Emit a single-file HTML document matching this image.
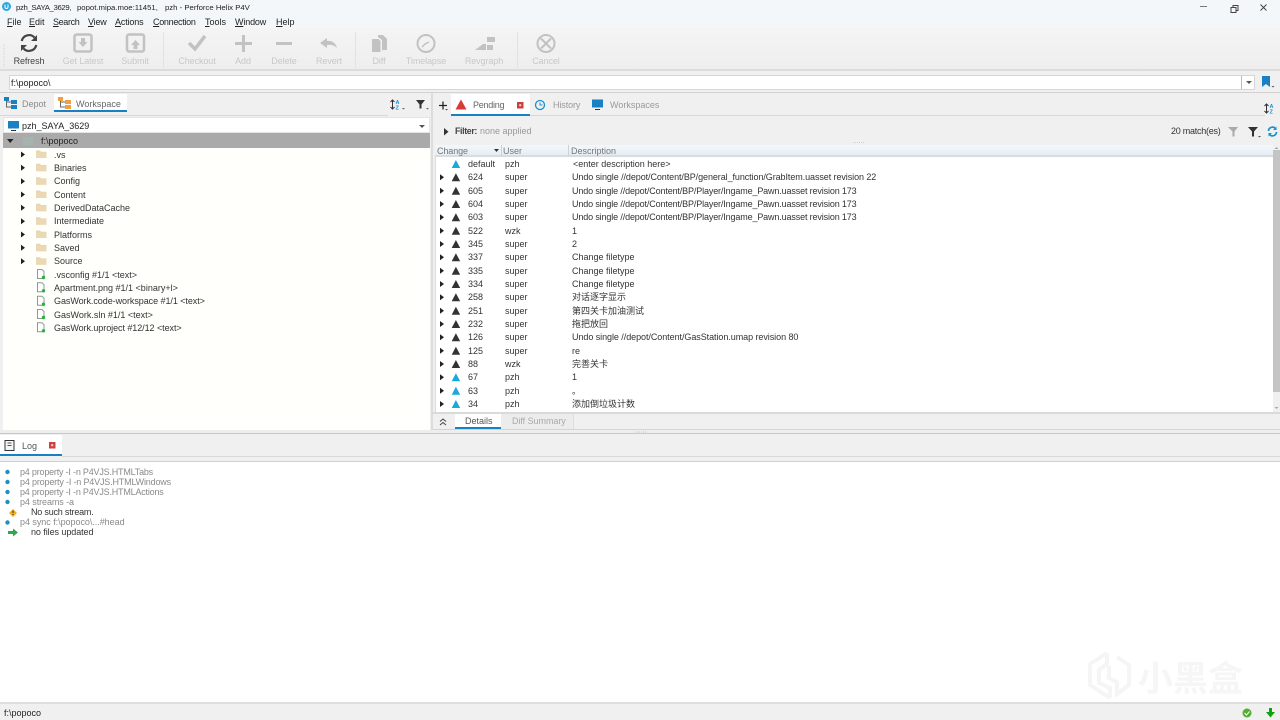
<!DOCTYPE html>
<html><head><meta charset="utf-8"><style>
html,body{margin:0;padding:0;width:1280px;height:720px;overflow:hidden;background:#fff}
body{position:relative;font-family:"Liberation Sans","Noto Sans CJK SC",sans-serif;font-size:9px;color:#333}
.b{position:absolute}
.t{position:absolute;white-space:nowrap;line-height:12px;height:12px;transform:translateY(-6px);color:#333}
.g{color:#c2c2c2}.m{color:#8a8a8a}.k{color:#222}
svg{position:absolute;overflow:visible}
.tb{position:absolute;white-space:nowrap;line-height:12px;text-align:center;width:80px;top:55px;color:#c8c8c8;font-size:9px;letter-spacing:-.1px}
u{text-decoration:underline;text-underline-offset:1px}
.u1{letter-spacing:-.08px}.u2{letter-spacing:-.14px}.u3{letter-spacing:-.06px}
</style></head><body>
<svg width="0" height="0" style="position:absolute">
<defs>
<g id="fold"><path d="M0 1h4l1 1.200h5.500v6.300H0z" fill="#e7d6ae"/><path d="M0 3h10.500v5.500H0z" fill="#ead9b4"/></g>
<g id="file"><path d="M.5.5h4.500l2 2v7h-6.500z" fill="#fff" stroke="#8c9a94" stroke-width="1"/><circle cx="6.500" cy="8.500" r="1.700" fill="#2fae3f"/></g>
<path id="arr" d="M0 0l4 3-4 3z" fill="#222"/>
<path id="tri" d="M0 8L4.200 0l4.300 8z"/>
</defs>
</svg>

<!-- title bar -->
<div class="b" style="left:0;top:0;width:1280px;height:15px;background:#f4f7f9"></div>
<svg style="left:2px;top:2px" width="9" height="9"><circle cx="4.500" cy="4.500" r="4.500" fill="#2aa7de"/><path d="M3 2.500v2.500a1.500 1.500 0 0 0 3 0V2.500" stroke="#fff" fill="none"/></svg>
<span class="t k" style="left:16px;top:7.500px;font-size:7.750px;letter-spacing:-.35px">pzh_SAYA_3629,</span>
<span class="t k" style="left:77px;top:7.500px;font-size:7.750px">popot.mipa.moe:11451,</span>
<span class="t k" style="left:165px;top:7.500px;font-size:7.750px">pzh - Perforce Helix P4V</span>
<svg style="left:1200px;top:4px" width="70" height="10"><path d="M0 2.500h7" stroke="#777" stroke-width="1"/><path d="M31 3.500h5v5h-5zM33 3.500V1.500h5v5h-2" stroke="#444" fill="none"/><path d="M60.500 .5l6 6M66.500 .5l-6 6" stroke="#444" fill="none"/></svg>

<!-- menu -->
<div class="b" style="left:0;top:15px;width:1280px;height:13px;background:#f4f7f9"></div>
<span class="t k" style="left:7px;top:22px"><u>F</u>ile</span>
<span class="t k" style="left:29px;top:22px"><u>E</u>dit</span>
<span class="t k" style="left:53px;top:22px;letter-spacing:-.35px"><u>S</u>earch</span>
<span class="t k" style="left:88px;top:22px;letter-spacing:-.2px"><u>V</u>iew</span>
<span class="t k" style="left:115px;top:22px;letter-spacing:-.15px"><u>A</u>ctions</span>
<span class="t k" style="left:153px;top:22px;letter-spacing:-.3px"><u>C</u>onnection</span>
<span class="t k" style="left:205px;top:22px"><u>T</u>ools</span>
<span class="t k" style="left:235px;top:22px;letter-spacing:-.15px"><u>W</u>indow</span>
<span class="t k" style="left:276px;top:22px"><u>H</u>elp</span>

<!-- toolbar -->
<div class="b" style="left:0;top:28px;width:1280px;height:43px;background:linear-gradient(#f4f4f4,#eeeeee);border-bottom:2px solid #dcdcdc;box-sizing:border-box"></div>
<div class="b" style="left:163px;top:32px;width:1px;height:36px;background:#e2e2e2"></div>
<div class="b" style="left:355px;top:32px;width:1px;height:36px;background:#e2e2e2"></div>
<div class="b" style="left:517px;top:32px;width:1px;height:36px;background:#e2e2e2"></div>
<div class="tb" style="left:-11px;color:#444">Refresh</div>
<div class="tb" style="left:43px">Get Latest</div>
<div class="tb" style="left:95px">Submit</div>
<div class="tb" style="left:157px">Checkout</div>
<div class="tb" style="left:203px">Add</div>
<div class="tb" style="left:244px">Delete</div>
<div class="tb" style="left:289px">Revert</div>
<div class="tb" style="left:339px">Diff</div>
<div class="tb" style="left:386px">Timelapse</div>
<div class="tb" style="left:444px">Revgraph</div>
<div class="tb" style="left:506px">Cancel</div>
<svg style="left:0;top:28px" width="570" height="30">
<g fill="none" stroke="#444" stroke-width="2.200"><path d="M21.700 13a7.500 7.500 0 0 1 12.800-3.500"/><path d="M36.300 17a7.500 7.500 0 0 1-12.800 3.500"/></g>
<path d="M37 7v6h-6zM21 23v-6h6z" fill="#444"/>
<g fill="none" stroke="#c2c2c2" stroke-width="2.500"><rect x="74.500" y="6.500" width="17" height="17" rx="2"/><rect x="127" y="6.500" width="17" height="17" rx="2"/></g>
<path d="M81 10h4v4h2.500l-4.500 5-4.500-5H81zM133.500 21h4v-4h2.500l-4.500-5-4.500 5h2.500z" fill="#c2c2c2"/>
<path d="M189 15l6 6 10-13" fill="none" stroke="#c2c2c2" stroke-width="3.500"/>
<path d="M243.500 7v17M235 15.500h17M276 15.500h16" stroke="#c2c2c2" stroke-width="3" fill="none"/>
<path d="M320 15l7-5v3c4-.5 8 .5 10 7-3-3-6-3.500-10-3v3z" fill="#c2c2c2"/>
<path d="M372 11h6.500l2 2v11H372zM378 7h5l4 4v11h-5V12l-4-3z" fill="#c2c2c2"/>
<circle cx="426" cy="15.500" r="8.500" fill="none" stroke="#c2c2c2" stroke-width="2"/><path d="M422 19l3-3 4-2" fill="none" stroke="#c2c2c2" stroke-width="1.500"/>
<path d="M475 22l8-6h3v6zM487 9h8v5h-8zM487 17h6v5h-6z" fill="#c2c2c2"/>
<circle cx="546" cy="15.500" r="8.500" fill="none" stroke="#c2c2c2" stroke-width="2"/><path d="M541 10.500l10 10M551 10.500l-10 10" stroke="#c2c2c2" stroke-width="2"/>
</svg>
<svg style="left:3px;top:44px" width="3" height="24"><path d="M1 0v24" stroke="#d4d4d4" stroke-dasharray="1 1"/></svg>

<!-- path bar -->
<div class="b" style="left:0;top:71px;width:1280px;height:22px;background:#f0f0f0;border-bottom:1px solid #d2d2d2;box-sizing:border-box"></div>
<div class="b" style="left:9px;top:75px;width:1246px;height:15px;background:#fff;border:1px solid #d6d6d6;box-sizing:border-box"></div>
<div class="b" style="left:1241px;top:76px;width:1px;height:13px;background:#bbb"></div>
<svg style="left:1246px;top:81px" width="7" height="4"><path d="M0 0h6l-3 3z" fill="#555"/></svg>
<span class="t k" style="left:11px;top:82.500px">f:\popoco\</span>
<svg style="left:1262px;top:76px" width="12" height="12"><path d="M0 0h8v11L4 8 0 11z" fill="#1a80c4"/><path d="M9.500 10h3l-1.500 1.500z" fill="#555"/></svg>

<!-- left panel -->
<div class="b" style="left:0;top:93px;width:431px;height:340px;background:#f0f0f0"></div>
<div class="b" style="left:54px;top:94px;width:73px;height:18px;background:#fff;border-bottom:2px solid #1a80c4;box-sizing:border-box"></div>
<div class="b" style="left:0;top:115px;width:388px;height:1px;background:#d8d8d8"></div>
<svg style="left:4px;top:97px" width="14" height="12"><g fill="#1a80c4"><rect x="0" y="0" width="5" height="4"/><rect x="7" y="3" width="6" height="4"/><rect x="7" y="8" width="6" height="4"/></g><path d="M2.500 4v6H7M2.500 5h4.500" stroke="#666" fill="none"/></svg>
<svg style="left:58px;top:97px" width="14" height="12"><g fill="#f0a040"><rect x="0" y="0" width="5" height="4"/><rect x="7" y="3" width="6" height="4"/><rect x="7" y="8" width="6" height="4"/></g><path d="M2.500 4v6H7M2.500 5h4.500" stroke="#666" fill="none"/></svg>
<span class="t m" style="left:22px;top:103.500px">Depot</span>
<span class="t" style="left:76px;top:103.500px;color:#666">Workspace</span>
<svg style="left:390px;top:99px" width="40" height="12">
<path d="M2.500 1v9M.5 3l2-2 2 2M.5 8l2 2 2-2" stroke="#333" fill="none"/>
<text x="5.500" y="5" font-size="5.500" fill="#1a90d0" font-family="Liberation Sans" font-weight="bold">A</text>
<text x="5.500" y="10.500" font-size="5.500" fill="#1a90d0" font-family="Liberation Sans" font-weight="bold">Z</text>
<path d="M12 9h3l-1.500 1.500zM36 9h3l-1.500 1.500z" fill="#666"/>
<path d="M26 1h9l-3.500 4.500v4h-2v-4z" fill="#333"/>
</svg>

<div class="b" style="left:3px;top:117px;width:427px;height:16px;background:#fff;border:1px solid #e4e4e4;box-sizing:border-box"></div>
<svg style="left:8px;top:121px" width="11" height="10"><rect width="11" height="7.500" fill="#1a80c4"/><path d="M3 9.500h5" stroke="#333"/></svg>
<span class="t k" style="left:22px;top:126px">pzh_SAYA_3629</span>
<svg style="left:419px;top:124.500px" width="7" height="4"><path d="M0 0h6l-3 3z" fill="#555"/></svg>

<div class="b" style="left:3px;top:133px;width:427px;height:15px;background:#aaaaaa"></div>
<div class="b" style="left:3px;top:148px;width:427px;height:282px;background:#fffffb"></div>
<svg style="left:7px;top:139px" width="7" height="5"><path d="M0 0h6.500L3.200 4z" fill="#222"/></svg>
<div class="b" style="left:23px;top:137px;width:10px;height:8px;background:#a3b5ae"></div>
<span class="t" style="left:41px;top:141px;color:#222">f:\popoco</span>

<svg style="left:0;top:0" width="60" height="340">
<use href="#arr" x="21" y="151.500"/><use href="#fold" x="36" y="149.500"/>
<use href="#arr" x="21" y="164.800"/><use href="#fold" x="36" y="162.800"/>
<use href="#arr" x="21" y="178.200"/><use href="#fold" x="36" y="176.200"/>
<use href="#arr" x="21" y="191.500"/><use href="#fold" x="36" y="189.500"/>
<use href="#arr" x="21" y="204.800"/><use href="#fold" x="36" y="202.800"/>
<use href="#arr" x="21" y="218.200"/><use href="#fold" x="36" y="216.200"/>
<use href="#arr" x="21" y="231.500"/><use href="#fold" x="36" y="229.500"/>
<use href="#arr" x="21" y="244.800"/><use href="#fold" x="36" y="242.800"/>
<use href="#arr" x="21" y="258.200"/><use href="#fold" x="36" y="256.200"/>
<use href="#file" x="37" y="269"/><use href="#file" x="37" y="282.300"/><use href="#file" x="37" y="295.700"/><use href="#file" x="37" y="309"/><use href="#file" x="37" y="322.300"/>
</svg>
<span class="t" style="left:54px;top:154.500px">.vs</span>
<span class="t" style="left:54px;top:168px">Binaries</span>
<span class="t" style="left:54px;top:181.300px">Config</span>
<span class="t" style="left:54px;top:194.700px">Content</span>
<span class="t" style="left:54px;top:208px">DerivedDataCache</span>
<span class="t" style="left:54px;top:221.300px">Intermediate</span>
<span class="t" style="left:54px;top:234.700px">Platforms</span>
<span class="t" style="left:54px;top:248px">Saved</span>
<span class="t" style="left:54px;top:261.300px">Source</span>
<span class="t" style="left:54px;top:274.700px">.vsconfig #1/1 &lt;text&gt;</span>
<span class="t" style="left:54px;top:288px">Apartment.png #1/1 &lt;binary+l&gt;</span>
<span class="t u3" style="left:54px;top:301.300px">GasWork.code-workspace #1/1 &lt;text&gt;</span>
<span class="t" style="left:54px;top:314.700px">GasWork.sln #1/1 &lt;text&gt;</span>
<span class="t u3" style="left:54px;top:328px">GasWork.uproject #12/12 &lt;text&gt;</span>

<!-- splitter -->
<div class="b" style="left:431px;top:93px;width:2px;height:340px;background:#dcdcdc"></div>

<!-- right panel -->
<div class="b" style="left:433px;top:93px;width:847px;height:340px;background:#f0f0f0"></div>
<div class="b" style="left:451px;top:94px;width:79px;height:22px;background:#fff;border-bottom:2px solid #1a80c4;box-sizing:border-box"></div>
<div class="b" style="left:530px;top:115px;width:735px;height:1px;background:#d8d8d8"></div>
<svg style="left:438px;top:99px" width="850" height="14">
<path d="M1 6.500h8M5 2.500v8" stroke="#222" stroke-width="1.300" fill="none"/><path d="M7 10h3l-1.500 1.500z" fill="#555"/>
<path d="M17.500 10.500l5.500-10 5.500 10z" fill="#d93a36"/>
<rect x="79" y="3" width="6.500" height="6.500" fill="#c9403c"/><rect x="81.200" y="5.200" width="2" height="2" fill="#f4d6d6"/>
<circle cx="102" cy="6" r="4.500" fill="none" stroke="#1a90d0" stroke-width="1.300"/><path d="M102 3.500V6h2.500" stroke="#1a90d0" fill="none"/>
<rect x="154" y="0.500" width="11" height="8" fill="#1a80c4"/><path d="M157 10.500h5" stroke="#333"/>
</svg>
<span class="t" style="left:473px;top:104.500px;color:#666;letter-spacing:-.25px">Pending</span>
<span class="t g" style="left:553px;top:104.500px;color:#999;letter-spacing:-.1px">History</span>
<span class="t g" style="left:610px;top:104.500px;color:#999">Workspaces</span>
<svg style="left:1264px;top:103px" width="14" height="12">
<path d="M2.500 1v9M.5 3l2-2 2 2M.5 8l2 2 2-2" stroke="#333" fill="none"/>
<text x="5.500" y="5" font-size="5.500" fill="#1a90d0" font-family="Liberation Sans" font-weight="bold">A</text>
<text x="5.500" y="10.500" font-size="5.500" fill="#1a90d0" font-family="Liberation Sans" font-weight="bold">Z</text>
</svg>

<svg style="left:444px;top:128px" width="6" height="8"><path d="M0 0l4.500 3.800L0 7.500z" fill="#333"/></svg>
<span class="t" style="left:455px;top:131px;color:#444;font-size:8.800px;letter-spacing:-.35px"><b>Filter:</b></span>
<span class="t m" style="left:480px;top:131px;color:#999">none applied</span>
<span class="t" style="left:1171px;top:131px;color:#333;letter-spacing:-.25px">20 match(es)</span>
<svg style="left:853px;top:142px" width="12" height="2"><path d="M0 .5h11" stroke="#cfcfcf" stroke-dasharray="1 1"/></svg>
<svg style="left:1228px;top:126px" width="50" height="12">
<path d="M0 1h10L6.500 5.500v5h-2v-5z" fill="#aaa"/>
<path d="M20 1h10l-4 4.500v5h-2v-5z" fill="#333"/><path d="M30 10h3l-1.500 1.500z" fill="#555"/>
<path d="M40.500 5a4 4 0 0 1 7-2.500M48.500 6a4 4 0 0 1-7 2.500" stroke="#1a90d0" stroke-width="1.700" fill="none"/>
<path d="M48.500 .5v3.500H45zM40.500 10.500V7H44z" fill="#1a90d0"/>
</svg>

<!-- table -->
<div class="b" style="left:435px;top:145px;width:845px;background:linear-gradient(#f4f8fc,#e6edf4);border-bottom:2px solid #d8dcdf;height:10px"></div>
<div class="b" style="left:501px;top:145px;width:1px;height:11px;background:#ccd2d8"></div>
<div class="b" style="left:568px;top:145px;width:1px;height:11px;background:#ccd2d8"></div>
<span class="t" style="left:437px;top:151px;color:#777;letter-spacing:-.1px">Change</span>
<span class="t" style="left:503px;top:151px;color:#777">User</span>
<span class="t" style="left:571px;top:151px;color:#777">Description</span>
<svg style="left:494px;top:149px" width="6" height="4"><path d="M0 0h5L2.500 3z" fill="#333"/></svg>
<div class="b" style="left:435px;top:157px;width:838px;height:255px;background:#fff;border-left:1px solid #dcdcdc;box-sizing:border-box"></div>
<div class="b" style="left:1273px;top:145px;width:7px;height:267px;background:#f0f0f0"></div>
<div class="b" style="left:1273px;top:150px;width:7px;height:242px;background:#c4c4c4"></div>
<svg style="left:1274px;top:146px" width="6" height="266"><path d="M.5 3L2.500 1l2 2zM.5 261l2 2 2-2z" fill="#a8a8a8"/></svg>
<div class="b" style="left:433px;top:412px;width:847px;height:2px;background:#dadada"></div>

<svg style="left:436px;top:158px" width="30" height="256">
<g fill="#1aa9dd"><use href="#tri" x="15.700" y="2"/></g>
<g fill="#333">
<use href="#tri" x="15.700" y="15.300"/><use href="#tri" x="15.700" y="28.700"/><use href="#tri" x="15.700" y="42"/><use href="#tri" x="15.700" y="55.300"/><use href="#tri" x="15.700" y="68.700"/><use href="#tri" x="15.700" y="82"/><use href="#tri" x="15.700" y="95.300"/><use href="#tri" x="15.700" y="108.700"/><use href="#tri" x="15.700" y="122"/><use href="#tri" x="15.700" y="135.300"/><use href="#tri" x="15.700" y="148.700"/><use href="#tri" x="15.700" y="162"/><use href="#tri" x="15.700" y="175.300"/><use href="#tri" x="15.700" y="188.700"/><use href="#tri" x="15.700" y="202"/>
</g>
<g fill="#1aa9dd"><use href="#tri" x="15.700" y="215.300"/><use href="#tri" x="15.700" y="228.700"/><use href="#tri" x="15.700" y="242"/></g>
<g>
<use href="#arr" x="4" y="16.300"/><use href="#arr" x="4" y="29.700"/><use href="#arr" x="4" y="43"/><use href="#arr" x="4" y="56.300"/><use href="#arr" x="4" y="69.700"/><use href="#arr" x="4" y="83"/><use href="#arr" x="4" y="96.300"/><use href="#arr" x="4" y="109.700"/><use href="#arr" x="4" y="123"/><use href="#arr" x="4" y="136.300"/><use href="#arr" x="4" y="149.700"/><use href="#arr" x="4" y="163"/><use href="#arr" x="4" y="176.300"/><use href="#arr" x="4" y="189.700"/><use href="#arr" x="4" y="203"/><use href="#arr" x="4" y="216.300"/><use href="#arr" x="4" y="229.700"/><use href="#arr" x="4" y="243"/>
</g>
</svg>

<span class="t" style="left:468px;top:164px">default</span><span class="t" style="left:505px;top:164px">pzh</span><span class="t" style="left:573px;top:164px">&lt;enter description here&gt;</span>
<span class="t" style="left:468px;top:177.300px">624</span><span class="t" style="left:505px;top:177.300px">super</span><span class="t u1" style="left:572px;top:177.300px">Undo single //depot/Content/BP/general_function/GrabItem.uasset revision 22</span>
<span class="t" style="left:468px;top:190.700px">605</span><span class="t" style="left:505px;top:190.700px">super</span><span class="t u2" style="left:572px;top:190.700px">Undo single //depot/Content/BP/Player/Ingame_Pawn.uasset revision 173</span>
<span class="t" style="left:468px;top:204px">604</span><span class="t" style="left:505px;top:204px">super</span><span class="t u2" style="left:572px;top:204px">Undo single //depot/Content/BP/Player/Ingame_Pawn.uasset revision 173</span>
<span class="t" style="left:468px;top:217.300px">603</span><span class="t" style="left:505px;top:217.300px">super</span><span class="t u2" style="left:572px;top:217.300px">Undo single //depot/Content/BP/Player/Ingame_Pawn.uasset revision 173</span>
<span class="t" style="left:468px;top:230.700px">522</span><span class="t" style="left:505px;top:230.700px">wzk</span><span class="t" style="left:572px;top:230.700px">1</span>
<span class="t" style="left:468px;top:244px">345</span><span class="t" style="left:505px;top:244px">super</span><span class="t" style="left:572px;top:244px">2</span>
<span class="t" style="left:468px;top:257.300px">337</span><span class="t" style="left:505px;top:257.300px">super</span><span class="t" style="left:572px;top:257.300px">Change filetype</span>
<span class="t" style="left:468px;top:270.700px">335</span><span class="t" style="left:505px;top:270.700px">super</span><span class="t" style="left:572px;top:270.700px">Change filetype</span>
<span class="t" style="left:468px;top:284px">334</span><span class="t" style="left:505px;top:284px">super</span><span class="t" style="left:572px;top:284px">Change filetype</span>
<span class="t" style="left:468px;top:297.300px">258</span><span class="t" style="left:505px;top:297.300px">super</span><span class="t" style="left:572px;top:297.300px">对话逐字显示</span>
<span class="t" style="left:468px;top:310.700px">251</span><span class="t" style="left:505px;top:310.700px">super</span><span class="t" style="left:572px;top:310.700px">第四关卡加油测试</span>
<span class="t" style="left:468px;top:324px">232</span><span class="t" style="left:505px;top:324px">super</span><span class="t" style="left:572px;top:324px">拖把放回</span>
<span class="t" style="left:468px;top:337.300px">126</span><span class="t" style="left:505px;top:337.300px">super</span><span class="t u3" style="left:572px;top:337.300px">Undo single //depot/Content/GasStation.umap revision 80</span>
<span class="t" style="left:468px;top:350.700px">125</span><span class="t" style="left:505px;top:350.700px">super</span><span class="t" style="left:572px;top:350.700px">re</span>
<span class="t" style="left:468px;top:364px">88</span><span class="t" style="left:505px;top:364px">wzk</span><span class="t" style="left:572px;top:364px">完善关卡</span>
<span class="t" style="left:468px;top:377.300px">67</span><span class="t" style="left:505px;top:377.300px">pzh</span><span class="t" style="left:572px;top:377.300px">1</span>
<span class="t" style="left:468px;top:390.700px">63</span><span class="t" style="left:505px;top:390.700px">pzh</span><span class="t" style="left:572px;top:390.700px">。</span>
<span class="t" style="left:468px;top:404px">34</span><span class="t" style="left:505px;top:404px">pzh</span><span class="t" style="left:572px;top:404px">添加倒垃圾计数</span>

<!-- details tabs -->
<div class="b" style="left:455px;top:414px;width:46px;height:15px;background:#fff;border-bottom:2px solid #1a80c4;box-sizing:border-box"></div>
<div class="b" style="left:501px;top:414px;width:73px;height:15px;background:#ececec;border-right:1px solid #ddd;box-sizing:border-box"></div>
<div class="b" style="left:433px;top:429px;width:847px;height:1px;background:#d4d4d4"></div>
<svg style="left:439px;top:418px" width="8" height="8"><path d="M1 3.500l3-2.500 3 2.500M1 7l3-2.500L7 7" stroke="#444" fill="none"/></svg>
<span class="t" style="left:465px;top:421px;color:#555">Details</span>
<span class="t" style="left:512px;top:421px;color:#aaa;letter-spacing:-.05px">Diff Summary</span>

<!-- log -->
<div class="b" style="left:0;top:430px;width:1280px;height:3px;background:#eeeeee"></div>
<svg style="left:635px;top:431px" width="12" height="2"><path d="M0 1h11" stroke="#c8c8c8" stroke-dasharray="1 1"/></svg>
<div class="b" style="left:0;top:433px;width:1280px;height:1px;background:#c8c8c8"></div>
<div class="b" style="left:0;top:434px;width:1280px;height:28px;background:#f0f0f0"></div>
<div class="b" style="left:0;top:435px;width:62px;height:21px;background:#fff;border-bottom:2px solid #1a80c4;box-sizing:border-box"></div>
<div class="b" style="left:62px;top:456px;width:1218px;height:1px;background:#d8d8d8"></div>
<div class="b" style="left:0;top:461px;width:1280px;height:1px;background:#d0d0d0"></div>
<svg style="left:4px;top:440px" width="56" height="12"><rect x="1" y=".5" width="9" height="10" fill="#f5f5f5" stroke="#333"/><path d="M3.500 3h4M3.500 5.500h4" stroke="#555"/><rect x="45" y="2" width="6.500" height="6.500" fill="#d0403c"/><rect x="47.200" y="4.200" width="2" height="2" fill="#f4d6d6"/></svg>
<span class="t" style="left:22px;top:445.500px;color:#555">Log</span>
<svg style="left:4px;top:468px" width="20" height="70">
<g fill="#1f8fbf"><circle cx="3.500" cy="4" r="2.200"/><circle cx="3.500" cy="14" r="2.200"/><circle cx="3.500" cy="24" r="2.200"/><circle cx="3.500" cy="34" r="2.200"/><circle cx="3.500" cy="54.500" r="2.200"/></g>
<path d="M9 41l4 4-4 4-4-4z" fill="#f2b10e"/><path d="M9 42.500v2.500M9 46v1" stroke="#333"/>
<path d="M4 63h5v-2.500l5 4-5 4V66H4z" fill="#2fa84a"/>
</svg>
<span class="t m" style="left:20px;top:472px;letter-spacing:-.2px">p4 property -I -n P4VJS.HTMLTabs</span>
<span class="t m" style="left:20px;top:482px;letter-spacing:-.17px">p4 property -I -n P4VJS.HTMLWindows</span>
<span class="t m" style="left:20px;top:492px;letter-spacing:-.2px">p4 property -I -n P4VJS.HTMLActions</span>
<span class="t m" style="left:20px;top:502px;letter-spacing:-.08px">p4 streams -a</span>
<span class="t" style="left:31px;top:512px;letter-spacing:-.2px">No such stream.</span>
<span class="t m" style="left:20px;top:522px;letter-spacing:-.04px">p4 sync f:\popoco\...#head</span>
<span class="t" style="left:31px;top:532px;letter-spacing:-.07px">no files updated</span>

<!-- watermark -->
<svg style="left:1085px;top:650px" width="160" height="55">
<path d="M22 3L5 14V35L25 48M22 3V14L14 20V33L25 38V48" fill="none" stroke="#f5f5f5" stroke-width="4"/>
<path d="M32 7L44 15V35L32 44V32L24 28V16" fill="none" stroke="#f5f5f5" stroke-width="4"/>
<text x="53" y="41" font-size="35" fill="#f6f6f6" font-family="Noto Sans CJK SC" font-weight="bold">小黑盒</text>
</svg>

<!-- status bar -->
<div class="b" style="left:0;top:702px;width:1280px;height:18px;background:#f0f0f0;border-top:2px solid #dedede;box-sizing:border-box"></div>
<span class="t k" style="left:4px;top:713px">f:\popoco</span>
<svg style="left:1242px;top:708px" width="36" height="10"><circle cx="5" cy="5" r="4.500" fill="#50b030"/><path d="M2.500 5l2 2 3-3.500" stroke="#fff" fill="none"/><path d="M27 0h3v4h3l-4.500 5.500L24 4h3z" fill="#12a012"/></svg>
</body></html>
